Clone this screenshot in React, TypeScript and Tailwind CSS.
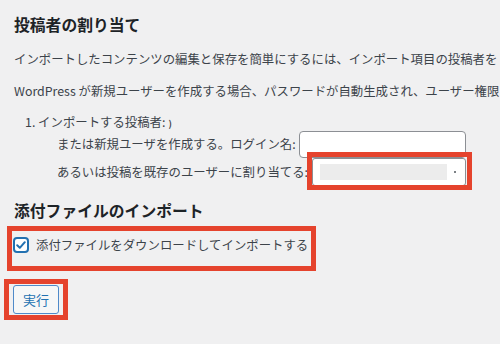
import React from "react";

const font = { fontFamily: '"Noto Sans CJK JP", "Noto Sans", sans-serif' };

export default function App() {
  return (
    <div
      className="w-[500px] h-[344px] overflow-hidden bg-[#f0f0f1] pl-[14px] text-[#3c434a] text-[12.4px]"
      style={font}
    >
      <div className="flex flex-col">
        <h2 className="mt-[15px] h-[20px] flex items-center text-[15.8px] font-bold text-[#1d2327] whitespace-nowrap">
          投稿者の割り当て
        </h2>
        <p className="mt-[14px] h-[20px] flex items-center whitespace-nowrap">
          インポートしたコンテンツの編集と保存を簡単にするには、インポート項目の投稿者を
        </p>
        <p className="mt-[12px] h-[20px] flex items-center whitespace-nowrap">
          WordPress が新規ユーザーを作成する場合、パスワードが自動生成され、ユーザー権限
        </p>
        <div className="mt-[12px] h-[18px] flex items-center pl-[11px] whitespace-nowrap">
          <span>1. インポートする投稿者:</span>
          <span className="ml-[3px] mt-[4px] text-[9px] font-bold text-[#3c434a]">)</span>
        </div>
        <div className="h-[27px] flex items-center pl-[43px] whitespace-nowrap">
          <span className="w-[242px]">または新規ユーザを作成する。ログイン名:</span>
          <div className="w-[167px] h-[27px] bg-white border border-[#8c8f94] rounded-[4px]" />
        </div>
        <div className="h-[28px] flex items-center pl-[43px] whitespace-nowrap">
          <span className="w-[255px] overflow-hidden">あるいは投稿を既存のユーザーに割り当てる:</span>
          <div className="relative">
            <div className="w-[154px] h-[28px] bg-white border border-[#8c8f94] rounded-[3px] flex items-center pl-[7px] pr-[9px]">
              <div className="w-[127px] h-[16px] bg-[#ececec]" />
              <div className="ml-auto w-[2px] h-[2px] rounded-full bg-[#50575e]" />
            </div>
            <div className="absolute left-[-5px] top-[-6px] right-[-6px] bottom-[-4px] border-[5px] border-[#e5432d]" />
          </div>
        </div>
        <h2 className="mt-[15px] h-[20px] flex items-center text-[15.8px] font-bold text-[#1d2327] whitespace-nowrap">
          添付ファイルのインポート
        </h2>
        <div className="mt-[5px] ml-[-7px] w-[309px] h-[45px] border-[5px] border-[#e5432d] flex items-start pl-[1px] pt-[6px] whitespace-nowrap">
          <div className="w-[16px] h-[16px] bg-white border-2 border-[#2271b1] rounded-[4px] flex items-center justify-center shrink-0">
            <svg width="12" height="12" viewBox="0 0 12 12">
              <path d="M2.2 6.3 L4.8 8.8 L9.8 3.2" fill="none" stroke="#2271b1" strokeWidth="2" strokeLinecap="round" strokeLinejoin="round" />
            </svg>
          </div>
          <span className="ml-[7px] h-[16px] flex items-center">添付ファイルをダウンロードしてインポートする</span>
        </div>
        <div className="mt-[8px] ml-[-10px] w-[64px] h-[41px] border-[5px] border-[#e5432d]">
          <button className="ml-[4px] mt-[1px] w-[46px] h-[29px] bg-[#f6f7f7] border border-[#4f8ac9] rounded-[3px] text-[#2271b1] text-[13px] flex items-center justify-center" style={font}>
            実行
          </button>
        </div>
      </div>
    </div>
  );
}
